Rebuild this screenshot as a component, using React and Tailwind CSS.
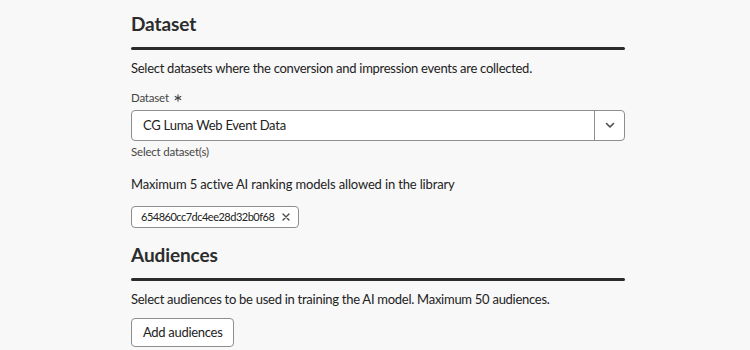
import React from "react";

function Section({ title, children }) {
  return (
    <section>
      <h2 className="text-[19px] font-bold leading-[26px] tracking-[-0.1px] text-[#2c2c2c]">{title}</h2>
      <div className="mt-[10px] h-[3px] rounded-full bg-[#2c2c2c]" />
      {children}
    </section>
  );
}

export default function App() {
  return (
    <div
      className="min-h-[350px] w-[750px] bg-[#f8f8f8] text-[#222222]"
      style={{ fontFamily: "Lato, 'Noto Sans', sans-serif" }}
    >
      <div className="ml-[131px] w-[494px] pt-[11px]">
        <Section title="Dataset">
          <p className="mt-[9px] text-[13px] leading-[18px] tracking-[-0.27px]">
            Select datasets where the conversion and impression events are collected.
          </p>

          <div className="mt-[13px] flex items-center gap-[5px] text-[11.5px] leading-[16px] tracking-[-0.2px] text-[#464646]">
            Dataset
            <svg width="8" height="8" viewBox="0 0 8 8">
              <path d="M4 0.8v6.4M1.2 2.4l5.6 3.2M6.8 2.4 1.2 5.6" stroke="#464646" strokeWidth="1.1" strokeLinecap="round" />
            </svg>
          </div>

          <div className="mt-[4px] flex h-[31px] rounded-[4px] border border-[#8e8e8e] bg-white">
            <div className="flex flex-1 items-center px-[11px] text-[13px] tracking-[-0.25px]">CG Luma Web Event Data</div>
            <button className="flex w-[30px] items-center justify-center border-l border-[#8e8e8e]">
              <svg width="10" height="7" viewBox="0 0 10 7" fill="none">
                <path d="M1.5 1.5 5 5l3.5-3.5" stroke="#4b4b4b" strokeWidth="1.6" strokeLinecap="round" strokeLinejoin="round" />
              </svg>
            </button>
          </div>
          <p className="mt-[3px] text-[11.5px] leading-[16px] tracking-[-0.2px] text-[#464646]">Select dataset(s)</p>

          <p className="mt-[15px] text-[13px] leading-[18px] tracking-[-0.15px]">
            Maximum 5 active AI ranking models allowed in the library
          </p>

          <div className="mt-[13px] mb-[14px] inline-flex h-[22px] items-center gap-[8px] rounded-[4px] border border-[#8e8e8e] bg-white pl-[9px] pr-[8px] text-[11px] tracking-[-0.5px]">
            <span>654860cc7dc4ee28d32b0f68</span>
            <svg width="8" height="8" viewBox="0 0 8 8">
              <path d="M1 1l6 6M7 1 1 7" stroke="#4b4b4b" strokeWidth="1.4" strokeLinecap="round" />
            </svg>
          </div>
        </Section>

        <Section title="Audiences">
          <p className="mt-[9px] text-[13px] leading-[18px] tracking-[-0.27px]">
            Select audiences to be used in training the AI model. Maximum 50 audiences.
          </p>
          <button className="mt-[10px] h-[29px] rounded-[4px] border border-[#8e8e8e] bg-white px-[11px] text-[13px] tracking-[-0.3px]">
            Add audiences
          </button>
        </Section>
      </div>
    </div>
  );
}
